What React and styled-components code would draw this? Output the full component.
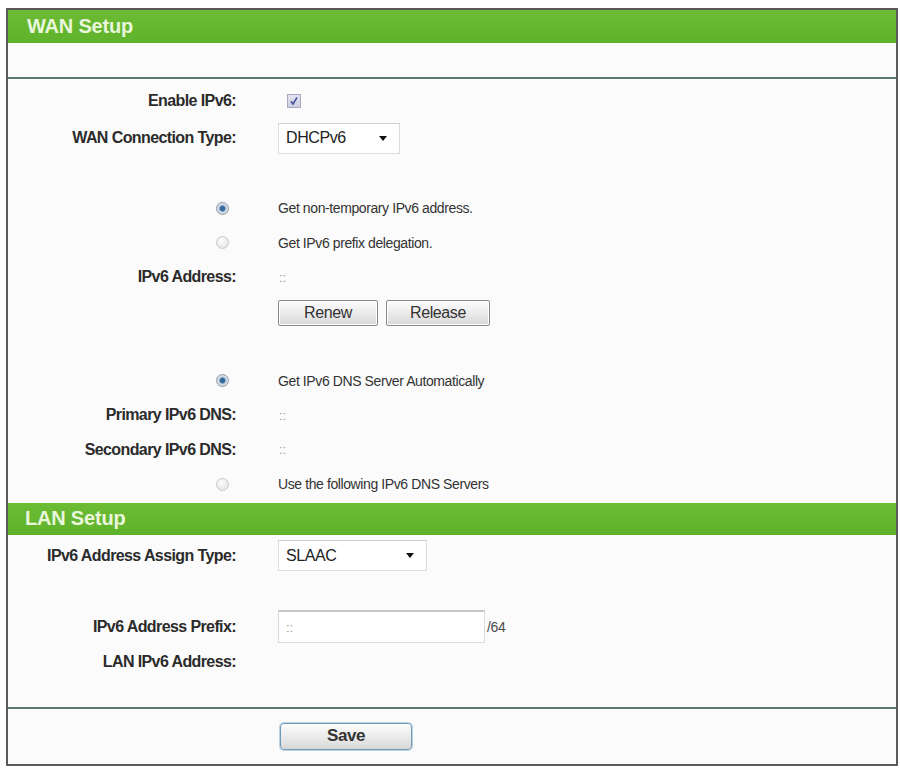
import React from 'react';
import styled, { createGlobalStyle } from 'styled-components';

const GlobalStyle = createGlobalStyle`
    html, body {
        margin: 0;
        padding: 0;
        background: #ffffff;
    }
    body {
        font-family: "Liberation Sans", Arial, sans-serif;
    }
`

const Frame = styled.div`
    margin: 8px 0 0 6px;
    width: 892px;
    box-sizing: border-box;
    border: 2px solid #5a5a5a;
    background: #fbfbfb;
`

const Header = styled.div`
    height: ${p => p.h || 33}px;
    background: linear-gradient(#6cbc34, #5fb22b);
    color: #e9f6dc;
    font-size: 20px;
    font-weight: bold;
    letter-spacing: -0.2px;
    display: flex;
    align-items: center;
    padding-left: ${p => p.pad || 19}px;
`

const Blank = styled.div`
    height: ${p => p.h}px;
`

const Divider = styled.div`
    height: 2px;
    background: #587a74;
`

const Section = styled.div`
    padding: ${p => p.top || 0}px 0 ${p => p.bottom || 0}px 0;
`

const Row = styled.div`
    display: grid;
    grid-template-columns: 228px 1fr;
    column-gap: 42px;
    align-items: center;
    height: ${p => p.h || 34.5}px;
`

const Label = styled.div`
    display: flex;
    justify-content: flex-end;
    font-size: 16px;
    font-weight: bold;
    letter-spacing: -0.6px;
    color: #2b2b2b;
    padding-right: ${p => p.pr || 0}px;
`

const Value = styled.div`
    display: flex;
    align-items: center;
    gap: 8px;
    font-size: 14px;
    letter-spacing: -0.4px;
    color: #333;
`

const Muted = styled.span`
    color: #9a9a9a;
    font-size: 13px;
    letter-spacing: 0;
    padding-left: 1px;
`

const Select = styled.div`
    box-sizing: border-box;
    width: ${p => p.w}px;
    height: 31px;
    border: 1px solid #dcdcdc;
    border-top-color: #cfcfcf;
    background: #fff;
    display: flex;
    align-items: center;
    justify-content: space-between;
    padding: 0 12px 0 7px;
    font-size: 16px;
    letter-spacing: -0.4px;
    color: #222;
`

const Arrow = styled.span`
    width: 0;
    height: 0;
    border-left: 4px solid transparent;
    border-right: 4px solid transparent;
    border-top: 5px solid #111;
`

const TextInput = styled.div`
    box-sizing: border-box;
    width: 207px;
    height: 33px;
    border: 1px solid #dadada;
    border-top: 2px solid #c8c8c8;
    background: #fff;
    display: flex;
    align-items: center;
    padding-left: 6px;
`

const Suffix = styled.span`
    color: #4a4a4a;
    font-size: 14px;
    margin-left: -6px;
`

const Button = styled.div`
    box-sizing: border-box;
    width: ${p => p.w}px;
    height: ${p => p.h || 26}px;
    border: 1px solid ${p => p.blue ? '#6f9bb8' : '#8a8a8a'};
    border-radius: ${p => p.blue ? 4 : 2}px;
    background: linear-gradient(#fdfdfd, #e9e9e9 55%, #d9d9d9);
    box-shadow: ${p => p.blue ? '0 0 0 1px #b9d3e3' : 'inset 0 0 0 1px #fff'};
    display: flex;
    align-items: center;
    justify-content: center;
    font-size: ${p => p.blue ? 17 : 16}px;
    font-weight: ${p => p.blue ? 'bold' : 'normal'};
    letter-spacing: -0.4px;
    color: #333;
`

const Check = styled.span`
    box-sizing: border-box;
    width: 14px;
    height: 14px;
    margin-left: 9px;
    border: 1px solid #a9a9c4;
    background: linear-gradient(#e3e3f0, #cfcfe2);
    display: flex;
    align-items: center;
    justify-content: center;
`

const Radio = styled.span`
    display: inline-block;
    box-sizing: border-box;
    width: 13px;
    height: 13px;
    border-radius: 50%;
    border: 1px solid ${p => p.on ? '#8f9aa6' : '#c9c9c9'};
    background: ${p => p.on
        ? 'radial-gradient(circle, #2f5f93 0, #3d74aa 2.5px, #c9d3de 3.5px, #eef1f4 100%)'
        : 'radial-gradient(circle at 40% 35%, #fdfdfd, #dedede)'};
`

const Footer = styled.div`
    height: 55px;
    display: flex;
    align-items: center;
    padding-left: 272px;
`

const App = () => {
    return (
        <>
            <GlobalStyle />
            <Frame>
                <Header>WAN Setup</Header>
                <Blank h={34} />
                <Divider />
                <Section top={5} bottom={1}>
                    <Row h={34}>
                        <Label>Enable IPv6:</Label>
                        <Value>
                            <Check>
                                <svg width="10" height="10" viewBox="0 0 10 10">
                                    <path d="M2 5.2 L4 8 L8 1.5" fill="none" stroke="#4b55a0" strokeWidth="1.6" />
                                </svg>
                            </Check>
                        </Value>
                    </Row>
                    <Row h={40}>
                        <Label>WAN Connection Type:</Label>
                        <Value>
                            <Select w={122}>DHCPv6<Arrow /></Select>
                        </Value>
                    </Row>
                    <Blank h={33} />
                    <Row>
                        <Label pr={7}><Radio on /></Label>
                        <Value>Get non-temporary IPv6 address.</Value>
                    </Row>
                    <Row>
                        <Label pr={7}><Radio /></Label>
                        <Value>Get IPv6 prefix delegation.</Value>
                    </Row>
                    <Row>
                        <Label>IPv6 Address:</Label>
                        <Value><Muted>::</Muted></Value>
                    </Row>
                    <Row h={36}>
                        <Label />
                        <Value>
                            <Button w={100}>Renew</Button>
                            <Button w={104}>Release</Button>
                        </Value>
                    </Row>
                    <Blank h={33} />
                    <Row>
                        <Label pr={7}><Radio on /></Label>
                        <Value>Get IPv6 DNS Server Automatically</Value>
                    </Row>
                    <Row>
                        <Label>Primary IPv6 DNS:</Label>
                        <Value><Muted>::</Muted></Value>
                    </Row>
                    <Row>
                        <Label>Secondary IPv6 DNS:</Label>
                        <Value><Muted>::</Muted></Value>
                    </Row>
                    <Row>
                        <Label pr={7}><Radio /></Label>
                        <Value>Use the following IPv6 DNS Servers</Value>
                    </Row>
                </Section>
                <Header h={32} pad={17}>LAN Setup</Header>
                <Section top={2}>
                    <Row h={38}>
                        <Label>IPv6 Address Assign Type:</Label>
                        <Value>
                            <Select w={149}>SLAAC<Arrow /></Select>
                        </Value>
                    </Row>
                    <Blank h={33} />
                    <Row h={38}>
                        <Label>IPv6 Address Prefix:</Label>
                        <Value>
                            <TextInput><Muted>::</Muted></TextInput>
                            <Suffix>/64</Suffix>
                        </Value>
                    </Row>
                    <Row h={33}>
                        <Label>LAN IPv6 Address:</Label>
                        <Value />
                    </Row>
                    <Blank h={28} />
                </Section>
                <Divider />
                <Footer>
                    <Button blue w={132} h={27}>Save</Button>
                </Footer>
            </Frame>
        </>
    );
}

export default App;
